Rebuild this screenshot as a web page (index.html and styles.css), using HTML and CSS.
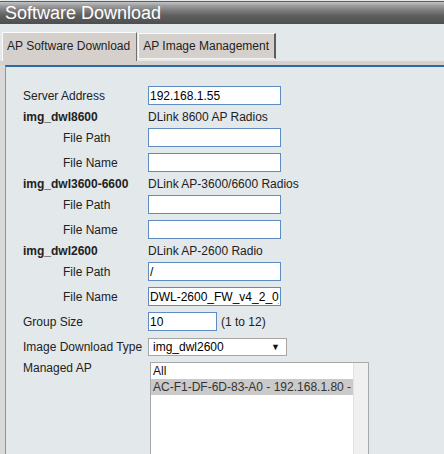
FILE: index.html
```html
<!DOCTYPE html>
<html>
<head>
<meta charset="utf-8">
<link rel="stylesheet" href="styles.css">
</head>
<body>
<div class="header"><div class="title">Software Download</div></div>
<div class="tabs">
  <div class="tab active">AP Software Download</div>
  <div class="tab">AP Image Management</div>
</div>
<div class="band"></div>
<div class="wrap">
  <div class="panel">
    <div class="row"><div class="lbl">Server Address</div><input class="inp" type="text" value="192.168.1.55"></div>
    <div class="row l"><div class="lbl b">img_dwl8600</div><div class="val">DLink 8600 AP Radios</div></div>
    <div class="row"><div class="lbl sub">File Path</div><input class="inp" type="text" value=""></div>
    <div class="row"><div class="lbl sub">File Name</div><input class="inp" type="text" value=""></div>
    <div class="row l"><div class="lbl b">img_dwl3600-6600</div><div class="val">DLink AP-3600/6600 Radios</div></div>
    <div class="row"><div class="lbl sub">File Path</div><input class="inp" type="text" value=""></div>
    <div class="row"><div class="lbl sub">File Name</div><input class="inp" type="text" value=""></div>
    <div class="row l"><div class="lbl b">img_dwl2600</div><div class="val">DLink AP-2600 Radio</div></div>
    <div class="row"><div class="lbl sub">File Path</div><input class="inp" type="text" value="/"></div>
    <div class="row"><div class="lbl sub">File Name</div><input class="inp" type="text" value="DWL-2600_FW_v4_2_0_1.tar"></div>
    <div class="row"><div class="lbl">Group Size</div><input class="inp small" type="text" value="10"><span class="hint">(1 to 12)</span></div>
    <div class="row"><div class="lbl">Image Download Type</div><div class="select"><span>img_dwl2600</span><span class="arrow">&#9660;</span></div></div>
    <div class="row top">
      <div class="lbl pad">Managed AP</div>
      <div class="listbox">
        <div class="opts">
          <div class="opt">All</div>
          <div class="opt sel">AC-F1-DF-6D-83-A0 - 192.168.1.80 -</div>
        </div>
        <div class="scroll"></div>
      </div>
    </div>
  </div>
</div>
</body>
</html>
```
FILE: styles.css
```css
html, body {
  margin: 0;
  padding: 0;
}
body {
  background: #e3e8eb;
  font: 12px "Liberation Sans", Arial, sans-serif;
  color: #222;
  overflow: hidden;
  height: 454px;
}
.header {
  margin-top: 1px;
  border-top: 1px solid #2b6a9c;
  height: 22px;
  background: linear-gradient(#c4c4c4 0%, #9a9a9a 18%, #7a7a7a 40%, #5e5e5e 62%, #4e4e4e 100%);
  padding-left: 5px;
  display: flex;
  align-items: center;
}
.title {
  color: #fff;
  font-size: 18px;
  line-height: 22px;
}
.tabs {
  height: 37px;
  box-sizing: border-box;
  padding: 8px 0 0 2px;
  display: flex;
  align-items: flex-start;
  background: #e3e8eb;
}
.tab {
  background: #d6d0cc;
  box-sizing: border-box;
  border-top: 1px solid #fbfbfb;
  border-left: 1px solid #fbfbfb;
  line-height: 14px;
  color: #222;
}
.tab.active {
  height: 29px;
  padding: 6px 6px 0 4px;
  border-right: 1px solid #6e6e6e;
}
.tab:not(.active) {
  margin-left: 1px;
  margin-top: 1px;
  height: 26px;
  padding: 5px 5px 0 4px;
  border-right: 2px solid #5c5c5c;
  border-bottom: 1px solid #f4f4f4;
}
.band {
  height: 4px;
  background: #d6d0cc;
}
.wrap {
  background: #d9d9d9;
  padding-left: 5px;
}
.panel {
  background: #e3e8eb;
  border-top: 2px solid #2b6a9c;
  border-left: 1px solid #7f98ad;
  padding: 16px 0 0 17px;
  height: 371px;
  overflow: hidden;
}
.row {
  display: flex;
  align-items: center;
  height: 25px;
}
.row.l {
  height: 17px;
}
.row.top {
  align-items: flex-start;
  height: auto;
}
.lbl {
  width: 125px;
  flex: none;
  box-sizing: border-box;
  white-space: nowrap;
}
.lbl.sub {
  padding-left: 40px;
}
.lbl.b {
  font-weight: bold;
}
.lbl.pad {
  padding-top: 1px;
  line-height: 16px;
}
.val {
  white-space: nowrap;
}
.inp {
  width: 133px;
  height: 19px;
  box-sizing: border-box;
  margin: 0;
  border: 1px solid #5f8cc0;
  background: #fff;
  padding: 0 1px;
  font: 12px "Liberation Sans", Arial, sans-serif;
  color: #000;
  outline: none;
}
.inp.small {
  width: 69px;
}
.hint {
  margin-left: 4px;
}
.select {
  width: 139px;
  height: 18px;
  box-sizing: border-box;
  border: 1px solid #a6a6a6;
  background: #fff;
  display: flex;
  align-items: center;
  justify-content: space-between;
  padding: 0 6px 0 4px;
  color: #000;
}
.arrow {
  font-size: 9px;
  color: #111;
}
.listbox {
  margin: 3px 0 0 2px;
  width: 219px;
  height: 92px;
  box-sizing: border-box;
  border: 1px solid #a8a8a8;
  border-bottom: none;
  background: #fff;
  display: flex;
}
.opts {
  flex: 1;
}
.opt {
  height: 16px;
  line-height: 16px;
  padding-left: 2px;
  white-space: nowrap;
  color: #111;
}
.opt.sel {
  background: #cacaca;
  color: #333;
}
.scroll {
  width: 14px;
  flex: none;
  background: #f0f0f0;
  border-left: 1px solid #e2e2e2;
}
```
